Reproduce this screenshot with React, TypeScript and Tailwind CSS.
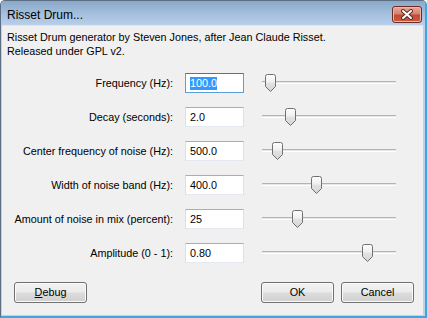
import React from 'react'

type Row = { label: string; value: string; thumb: number; focused?: boolean }

const rows: Row[] = [
  { label: 'Frequency (Hz):', value: '100.0', thumb: 3, focused: true },
  { label: 'Decay (seconds):', value: '2.0', thumb: 23 },
  { label: 'Center frequency of noise (Hz):', value: '500.0', thumb: 10 },
  { label: 'Width of noise band (Hz):', value: '400.0', thumb: 49 },
  { label: 'Amount of noise in mix (percent):', value: '25', thumb: 30 },
  { label: 'Amplitude (0 - 1):', value: '0.80', thumb: 100 },
]

function Thumb() {
  return (
    <svg width="11" height="18" viewBox="0 0 11 18">
      <defs>
        <linearGradient id="thumbFill" x1="0" y1="0" x2="0" y2="1">
          <stop offset="0" stopColor="#fdfdfd" />
          <stop offset="0.45" stopColor="#f0f0f0" />
          <stop offset="0.5" stopColor="#e2e2e2" />
          <stop offset="1" stopColor="#d4d4d4" />
        </linearGradient>
      </defs>
      <path
        d="M0.5 2.5 Q0.5 0.5 2.5 0.5 H8.5 Q10.5 0.5 10.5 2.5 V12.5 L5.5 17.5 L0.5 12.5 Z"
        fill="url(#thumbFill)"
        stroke="#707070"
        strokeWidth="1"
      />
    </svg>
  )
}

function Slider({ thumb }: { thumb: number }) {
  return (
    <div className="relative h-[20px] w-[134px]">
      <div className="absolute left-0 right-0 top-[8px] h-[1px] bg-[#b4b4b4]" />
      <div className="absolute left-0 right-0 top-[9px] h-[1px] bg-[#e6e6e6]" />
      <div className="absolute left-0 right-0 top-[10px] h-[1px] bg-[#ffffff]" />
      <div className="absolute top-[1px]" style={{ left: thumb }}>
        <Thumb />
      </div>
    </div>
  )
}

function Button({ children, className = '' }: { children: React.ReactNode; className?: string }) {
  return (
    <button
      type="button"
      className={`h-[21px] w-[73px] rounded-[3px] border border-[#707070] bg-[linear-gradient(to_bottom,#f2f2f2_0%,#ebebeb_48%,#dddddd_52%,#cfcfcf_100%)] shadow-[inset_0_0_0_1px_#fbfbfb] text-[10.8px] leading-none text-black ${className}`}
    >
      {children}
    </button>
  )
}

export default function App() {
  return (
    <div
      className="w-[427px] h-[318px] flex flex-col border-l border-t border-[#5b6e84] border-r-2 border-b-2 border-r-[#3ea6e0] border-b-[#3ea6e0] bg-[#bcd3eb] rounded-t-[5px] overflow-hidden"
      style={{ fontFamily: '"Liberation Sans", Arial, sans-serif' }}
    >
      {/* Title bar */}
      <div className="h-[24px] flex items-center justify-between pl-[6px] pr-[3px] bg-[linear-gradient(to_bottom,#8aa7c9_0%,#a3bedc_50%,#b8cfe9_100%)]">
        <span className="text-[12px] text-black pt-[3px]">Risset Drum...</span>
        <div className="mt-[2px] w-[30px] h-[17px] flex items-center justify-center rounded-[3px] border border-[#6e2b22] bg-[linear-gradient(to_bottom,#e9a99b_0%,#d7806d_45%,#c24b34_55%,#c85a40_100%)] shadow-[inset_0_0_0_1px_#eeb6a8]">
          <svg width="14" height="11" viewBox="0 0 14 11">
            <path d="M3 2 L11 9 M11 2 L3 9" stroke="#5a2e2a" strokeWidth="4" strokeLinecap="round" />
            <path d="M3 2 L11 9 M11 2 L3 9" stroke="#ffffff" strokeWidth="2" strokeLinecap="round" />
          </svg>
        </div>
      </div>

      {/* Client area */}
      <div className="flex-1 ml-[1px] mr-[2px] mb-[1px] bg-[#f0f0f0] border-t border-[#dde6f0] flex flex-col text-[10.8px] text-black">
        <div className="pl-[5px] pt-[4px] leading-[14px]">
          <div>Risset Drum generator by Steven Jones, after Jean Claude Risset.</div>
          <div>Released under GPL v2.</div>
        </div>

        <div className="mt-[15px] flex flex-col gap-[14px]">
          {rows.map((row) => (
            <div key={row.label} className="flex items-center h-[20px]">
              <div className="w-[171px] text-right">{row.label}</div>
              <div
                className={`ml-[12px] w-[59px] h-[20px] flex items-center pl-[4px] bg-white border ${
                  row.focused
                    ? 'border-[#5c9fd8] border-t-[#3d7bad]'
                    : 'border-[#e3e9ef] border-t-[#abadb3] border-l-[#dbdfe6] border-r-[#dbdfe6]'
                }`}
              >
                {row.focused ? (
                  <span className="bg-[#3399ff] text-white leading-[13px]">{row.value}</span>
                ) : (
                  <span>{row.value}</span>
                )}
              </div>
              <div className="ml-[18px]">
                <Slider thumb={row.thumb} />
              </div>
            </div>
          ))}
        </div>

        <div className="mt-[19px] flex items-center pl-[12px] pr-[9px]">
          <Button>
            <span className="underline">D</span>ebug
          </Button>
          <div className="flex-1" />
          <Button>OK</Button>
          <Button className="ml-[7px]">Cancel</Button>
        </div>
      </div>
    </div>
  )
}
